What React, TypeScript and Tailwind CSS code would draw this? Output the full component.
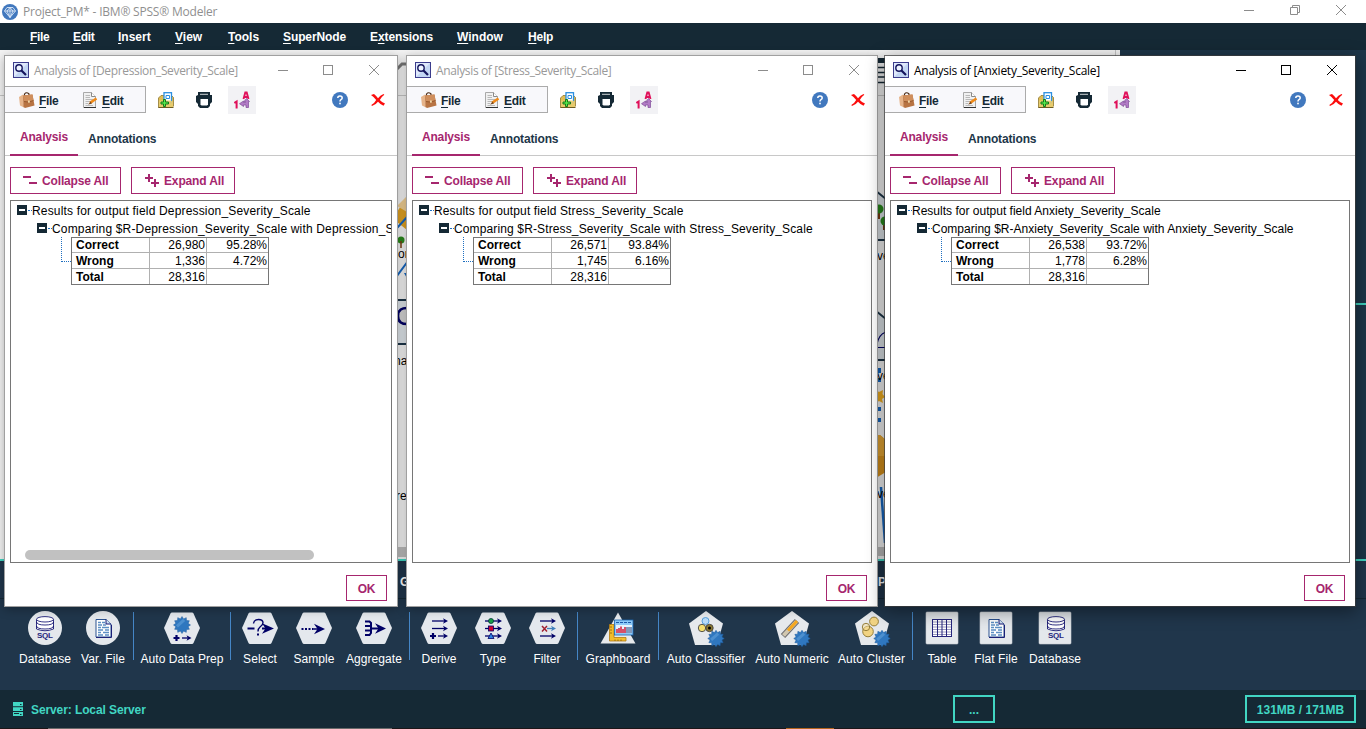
import React from "react";

const NAVY = "#000066";

function Mn({ text, k = 0 }: { text: string; k?: number }) {
  return (
    <>
      {text.slice(0, k)}
      <span className="underline underline-offset-2">{text[k]}</span>
      {text.slice(k + 1)}
    </>
  );
}

function LensIcon() {
  return (
    <svg width="16" height="16" viewBox="0 0 16 16" className="block shrink-0">
      <rect x=".5" y=".5" width="15" height="15" fill="#dfe9fb" stroke="#3c3c8c" />
      <path d="M1 15L15 15L15 1Z" fill="#c3d6f3" />
      <circle cx="6" cy="6" r="3.2" fill="#eef5ff" stroke="#15155e" strokeWidth="1.4" />
      <path d="M8.5 8.5L13 13" stroke="#15155e" strokeWidth="2.2" />
    </svg>
  );
}

function BagIcon() {
  return (
    <svg width="16" height="16" viewBox="0 0 16 16" className="block shrink-0">
      <path d="M5.500 4V2Q7.500 -.5 10 2V4" fill="none" stroke="#4b2c18" strokeWidth="1.2" />
      <path d="M0 5L4 2.500L5 15.500L1 13.500Z" fill="#e6b48a" />
      <path d="M4 3.500L13.500 2.500L15.500 13.500L6 16L4.500 15Z" fill="#b87443" />
      <path d="M4 3.500L13.500 2.500L14.500 8.500L9.500 10L5 9.500Z" fill="#cf8e5c" />
      <path d="M5 9.500L9.500 10L14.500 8.500" stroke="#8a4f25" fill="none" strokeWidth=".8" />
      <rect x="9" y="8.500" width="1.800" height="2.200" fill="#f2d9a8" />
    </svg>
  );
}

function EditIcon() {
  return (
    <svg width="16" height="16" viewBox="0 0 16 16" className="block shrink-0">
      <path d="M.5 .5H8.500L12.500 4.500V15.500H.5Z" fill="#f1f1f1" stroke="#a9a9a9" />
      <path d="M8.500 .5V4.500H12.500" fill="#fff" stroke="#8a8a8a" />
      <path d="M2.500 3.500H7M2.500 5.500H7M2.500 7.500H10M2.500 9.500H8M2.500 11.500H5M2.500 13.500H10" stroke="#b9b9b9" />
      <path d="M13.500 6.500L7 10.800" stroke="#f08a18" strokeWidth="2.600" />
      <path d="M7.800 9.500L5 12.500L8.800 11.800Z" fill="#7a4a20" />
      <path d="M1 15.500H13" stroke="#333" />
    </svg>
  );
}

function SaveIcon() {
  return (
    <svg width="16" height="16" viewBox="0 0 16 16" className="block">
      <path d="M.5 6L3 3.500H13.500L15.500 5.500V14L14 15.500H.5Z" fill="#e2bd52" stroke="#8f7a32" strokeWidth=".8" />
      <rect x="6" y=".7" width="7.500" height="10" fill="#fff" stroke="#2a8fe0" strokeWidth="1.300" />
      <path d="M8 3.500H11.500V6.500H8Z" fill="none" stroke="#2a8fe0" />
      <path d="M1 8.500H12.500L15 9.500V15H1Z" fill="#e8cc70" fillOpacity=".9" />
      <path d="M3 10H5.500V7.500H7.500V10H10.500V12H7.500V14.500H5.500V12H3Z" fill="#56e84a" stroke="#167a1a" />
      <path d="M.5 15.500H15.500" stroke="#6c5b22" />
    </svg>
  );
}

function PrintIcon() {
  return (
    <svg width="16" height="16" viewBox="0 0 16 16" className="block">
      <path d="M2 0H14V3H16V10L14 12V14L12 16H4L2 14V12L0 10V4L2 3Z" fill="#152935" />
      <path d="M4 2.300H12" stroke="#fff" strokeWidth=".8" />
      <path d="M4.500 7H12V12.500L11 13.500H5.500L4.500 12.500Z" fill="#fff" />
    </svg>
  );
}

function SortIcon() {
  return (
    <svg width="16" height="18" viewBox="0 0 16 18" className="block">
      <path d="M9.500 8L11.300 1.500H12.700L14.500 8M10 6H14" fill="none" stroke="#e0105a" strokeWidth="1.900" />
      <path d="M.3 12L2.600 10.500V17.500" fill="none" stroke="#e0105a" strokeWidth="2" />
      <path d="M12.500 7.500L15.500 10.500H14.500V16.500H12V14H9.500V15.500L5.500 12.700L9.500 10V11.500H11.500V10.500H10Z" fill="#b27bc6" stroke="#804b98" strokeWidth=".7" />
    </svg>
  );
}

function HelpIcon() {
  return (
    <svg width="16" height="16" viewBox="0 0 16 16" className="block">
      <circle cx="8" cy="8" r="8" fill="#4178be" />
      <path d="M5.800 6Q5.800 4 8 4T10.200 5.900Q10.200 7 9 7.600Q8 8.200 8 9.500" fill="none" stroke="#fff" strokeWidth="1.500" />
      <rect x="7.200" y="10.700" width="1.600" height="1.600" fill="#fff" />
    </svg>
  );
}

function RedX() {
  return (
    <svg width="14" height="12" viewBox="0 0 14 12" className="block">
      <path d="M0 1L3 0Q6 2.500 7 4.200Q9 1.500 12.500 0L13.300 .8Q9.800 3.500 8.800 6Q11 8.500 14 9.500L12.500 11.800Q9 10 7 7.700Q5 10.500 1 12L.3 11Q4 8.500 5.200 6Q3 3 0 1Z" fill="#fb0d0d" />
    </svg>
  );
}

function Caption({ stroke, kind }: { stroke: string; kind: "min" | "max" | "close" | "restore" }) {
  return (
    <svg width="12" height="12" viewBox="0 0 12 12" className="block" fill="none" stroke={stroke}>
      {kind === "min" && <path d="M1 6.500H11" />}
      {kind === "max" && <rect x="1.500" y="1.500" width="9" height="9" />}
      {kind === "close" && <path d="M1 1L11 11M11 1L1 11" />}
      {kind === "restore" && <path d="M3.500 3.500V1.500H10.500V8.500H8.500M1.500 3.500H8.500V10.500H1.500Z" />}
    </svg>
  );
}

function TreeBox() {
  return (
    <>
      <span className="flex h-[10px] w-[10px] shrink-0 items-center justify-center bg-[#152935]">
        <span className="h-[2px] w-[6px] bg-white" />
      </span>
      <span className="ml-px w-[4px] shrink-0 border-t border-dotted border-[#1f70c1]" />
    </>
  );
}

type Win = {
  name: string;
  rows: [string, string, string][];
  place: string;
  frame: string;
  title: string;
  titleColor: string;
  tree: string;
  ink: string;
  scroll?: boolean;
};

function AnalysisWindow({ w }: { w: Win }) {
  return (
    <div className={`absolute flex flex-col bg-white ${w.place} ${w.frame}`}>
      <div className="flex h-[30px] shrink-0 items-center pl-[8px]">
        <span className="-mt-[2px]"><LensIcon /></span>
        <span className={`ml-[5px] flex-1 whitespace-nowrap font-['Open_Sans',sans-serif] text-[12px] ${w.title} ${w.titleColor}`}>
          Analysis of [{w.name}]
        </span>
        <div className="flex items-center pb-[2px] pr-[17px]">
          <span className="mr-[33px]"><Caption stroke={w.ink} kind="min" /></span>
          <span className="mr-[34px]"><Caption stroke={w.ink} kind="max" /></span>
          <Caption stroke={w.ink} kind="close" />
        </div>
      </div>
      <div className="flex h-[28px] shrink-0 items-start">
        <div className="flex h-[27px] w-[141px] items-center border border-l-0 border-[#ababab] bg-[#f8f8fb] pl-[14px] font-bold tracking-[-0.3px] text-[#152935]">
          <BagIcon />
          <span className="ml-[4px] w-[44px] pt-[2px]"><Mn text="File" /></span>
          <EditIcon />
          <span className="ml-[3px] pt-[2px]"><Mn text="Edit" /></span>
        </div>
        <div className="flex h-[28px] flex-1 items-center">
          <span className="ml-[12px]"><SaveIcon /></span>
          <span className="ml-[22px]"><PrintIcon /></span>
          <span className="ml-[16px] flex h-[28px] w-[28px] items-center justify-center bg-[#f2f2f5]"><SortIcon /></span>
          <span className="ml-auto mr-[23px]"><HelpIcon /></span>
          <span className="mr-[12px]"><RedX /></span>
        </div>
      </div>
      <div className="flex h-[42px] shrink-0 border-b border-[#c8c8c8] pl-[5px] font-bold tracking-[-0.15px]">
        <div className="flex h-[42px] w-[68px] justify-center border-b-2 border-[#a6266e] pt-[16px] text-[#a6266e]">Analysis</div>
        <div className="ml-[10px] pt-[18px] text-[#1d3649]">Annotations</div>
      </div>
      <div className="flex h-[44px] shrink-0 items-start gap-[10px] pl-[5px] pt-[11px] font-bold tracking-[-0.15px] text-[#a6266e]">
        <div className="flex h-[27px] w-[111px] items-center border border-[#a6266e] pl-[12px]">
          <svg width="15" height="12" viewBox="0 0 15 12"><path d="M0 2H8M6 8H14" stroke="#a6266e" strokeWidth="2" /></svg>
          <span className="ml-[4px] whitespace-nowrap">Collapse All</span>
        </div>
        <div className="flex h-[27px] w-[104px] items-center border border-[#a6266e] pl-[13px]">
          <svg width="15" height="14" viewBox="0 0 15 14"><path d="M0 4H8M4 0V8M6 9H14M10 5V13" stroke="#a6266e" strokeWidth="2" /></svg>
          <span className="ml-[4px] whitespace-nowrap">Expand All</span>
        </div>
      </div>
      <div className="ml-[5px] mr-[5px] flex h-[363px] shrink-0 flex-col overflow-hidden border border-[#767676] text-black">
        <div className={`flex h-[18px] items-center pl-[6px] ${w.tree}`}>
          <TreeBox />
          <span className="whitespace-nowrap pt-[2px]">Results for output field {w.name}</span>
        </div>
        <div className={`flex h-[18px] items-center pl-[26px] ${w.tree}`}>
          <TreeBox />
          <span className="whitespace-nowrap pt-[2px]">Comparing $R-{w.name} with {w.name}</span>
        </div>
        <div className="flex pl-[50px]">
          <span className="h-[25px] w-[10px] border-b border-l border-dotted border-[#1f70c1]" />
          <div className="grid w-[198px] grid-cols-[78px_57px_61px] grid-rows-[15px_16px_15px] border border-[#767676] leading-[15px]">
            {w.rows.map((r, i) => (
              <React.Fragment key={r[0]}>
                <span className={`border-r border-[#b0b0b0] pl-[4px] font-bold ${i < 2 ? "border-b" : ""} ${i ? "pt-px" : ""}`}>{r[0]}</span>
                <span className={`border-r border-[#b0b0b0] pr-px text-right ${i < 2 ? "border-b" : ""} ${i ? "pt-px" : ""}`}>{r[1]}</span>
                <span className={`border-[#b0b0b0] pr-px text-right ${i < 2 ? "border-b" : ""} ${i ? "pt-px" : ""}`}>{r[2]}</span>
              </React.Fragment>
            ))}
          </div>
        </div>
        {w.scroll && <div className="mb-[2px] ml-[14px] mt-auto h-[10px] w-[289px] rounded-full bg-[#c1c1c1]" />}
      </div>
      <div className="mr-[10px] mt-[12px] flex h-[26px] w-[41px] items-center justify-center self-end border border-[#a6266e] pt-px font-bold tracking-[-0.2px] text-[#a6266e]">OK</div>
    </div>
  );
}

const windows: Win[] = [
  {
    name: "Depression_Severity_Scale",
    rows: [["Correct", "26,980", "95.28%"], ["Wrong", "1,336", "4.72%"], ["Total", "28,316", ""]],
    place: "left-[5px] top-[56px] h-[550px] w-[392px]",
    frame: "shadow-[0_0_0_1px_#a0a0a0,0_2px_10px_1px_rgba(0,0,0,0.3)]",
    title: "tracking-[-0.35px]",
    titleColor: "text-[#999999]",
    tree: "tracking-[0.17px]",
    ink: "#8c8c8c",
    scroll: true,
  },
  {
    name: "Stress_Severity_Scale",
    rows: [["Correct", "26,571", "93.84%"], ["Wrong", "1,745", "6.16%"], ["Total", "28,316", ""]],
    place: "left-[407px] top-[56px] h-[550px] w-[470px]",
    frame: "shadow-[0_0_0_1px_#a0a0a0,0_2px_10px_1px_rgba(0,0,0,0.3)]",
    title: "tracking-[-0.36px]",
    titleColor: "text-[#999999]",
    tree: "tracking-[0.13px]",
    ink: "#8c8c8c",
  },
  {
    name: "Anxiety_Severity_Scale",
    rows: [["Correct", "26,538", "93.72%"], ["Wrong", "1,778", "6.28%"], ["Total", "28,316", ""]],
    place: "left-[885px] top-[56px] h-[550px] w-[470px]",
    frame: "shadow-[0_0_0_1px_rgba(60,60,60,0.7),0_4px_16px_2px_rgba(0,0,0,0.4)]",
    title: "tracking-[-0.26px]",
    titleColor: "text-black",
    tree: "tracking-[0.01px]",
    ink: "#000000",
  },
];

const hex = <path d="M12 3.500H32Q33 3.500 33.500 4.500L40 19L33.500 34Q33 35 32 35H12Q11 35 10.500 34L4 19L10.500 4.500Q11 3.500 12 3.500Z" fill="#e4e8ed" />;
const circle = <circle cx="22" cy="19" r="17" fill="#e4e8ec" />;
const square = <rect x="6" y="3" width="32" height="32" rx="1" fill="#e4e8ec" stroke="#c9cfd5" strokeWidth=".6" />;
const penta = <path d="M22 2L39 14.500L33 36H11L5 14.500Z" fill="#e6e9ec" />;

function Arrow({ x1, x2, y, color = NAVY }: { x1: number; x2: number; y: number; color?: string }) {
  return (
    <>
      <path d={`M${x1} ${y}H${x2 - 3}`} stroke={color} strokeWidth="1.300" />
      <path d={`M${x2} ${y}l-5 -2.700l1.300 2.700l-1.300 2.700z`} fill={color} />
    </>
  );
}

function Gear({ cx, cy, r = 7 }: { cx: number; cy: number; r?: number }) {
  const pts = Array.from({ length: 24 }, (_, i) => {
    const a = (i * Math.PI) / 12;
    const q = i % 2 ? r * 0.88 : r * 1.18;
    return `${(cx + q * Math.cos(a)).toFixed(2)},${(cy + q * Math.sin(a)).toFixed(2)}`;
  }).join(" ");
  return (
    <>
      <polygon points={pts} fill="#2f77bf" stroke="#1d5a9c" strokeWidth=".5" />
      <path d={`M${cx - r * 0.7} ${cy + r * 0.2}L${cx + r * 0.3} ${cy - r * 0.7}`} stroke="#69a8df" strokeWidth="3" opacity=".5" />
    </>
  );
}

function Sql({ r = 0 }: { r?: number }) {
  return (
    <g transform={`translate(${r} 0)`}>
      <path d="M13.500 10.500V20Q22 23.500 30.500 20V10.500" fill="#fff" stroke={NAVY} strokeWidth=".8" />
      <ellipse cx="22" cy="10.300" rx="8.500" ry="2.700" fill="#fff" stroke={NAVY} strokeWidth=".8" />
      <path d="M13.500 13Q14 16 22 16T30.500 13M13.500 17Q14 20 22 20T30.500 17" fill="none" stroke={NAVY} strokeWidth=".8" />
      <text x="22" y="29" textAnchor="middle" fontSize="8" fontWeight="bold" fontFamily="Liberation Sans, sans-serif" fill="#26267c" textLength="16">SQL</text>
    </g>
  );
}

function DocGlyph() {
  return (
    <>
      <path d="M15 10.500H25L30 15V28H15Z" fill="#fff" stroke="#2a5290" />
      <path d="M25 10.500V15H30" fill="#cfe0f3" stroke={NAVY} strokeWidth=".9" />
      <path d="M17 13.500H20M21 13.500H24M17 16H21M22 16H25M17 18.500H20M21 18.500H28M17 21H22M24 21H28M17 23.500H20M22 23.500H28M17 26H22M24 26H28" stroke="#5c8fc4" strokeWidth="1.500" />
      <path d="M30.500 16V28.500H15" fill="none" stroke={NAVY} strokeWidth=".8" />
    </>
  );
}

const glyphs: Record<string, React.ReactNode> = {
  db: <>{circle}<Sql /></>,
  file: <>{circle}<DocGlyph /></>,
  prep: <>{hex}<Gear cx={22} cy={16} r={7.200} /><path d="M13.500 29H19.500M16.500 26V32" stroke={NAVY} strokeWidth="2.200" /><Arrow x1={22} x2={31.500} y={29} /></>,
  select: <>{hex}<path d="M9.500 19.500H16.500M24 19.500H28" stroke={NAVY} strokeWidth="1.800" /><path d="M15.500 14.500Q16 10.500 20.500 10.500Q25 10.500 25 13.800Q25 16 22 18Q20 19.500 20 22.500" fill="none" stroke={NAVY} strokeWidth="1.400" /><rect x="19" y="24.500" width="2" height="2" fill={NAVY} /><path d="M36 19.500l-12 -5.300l3.500 5.300l-3.500 5.300z" fill={NAVY} /></>,
  sample: <>{hex}<path d="M9.500 20H21" stroke={NAVY} strokeWidth="2" strokeDasharray="2 1.500" /><path d="M21 20H26" stroke={NAVY} strokeWidth="1.500" /><path d="M33 20l-11 -5.300l3.500 5.300l-3.500 5.300z" fill={NAVY} /></>,
  agg: <>{hex}<path d="M13 12.500H17.500L19 14V24L17.500 26H13M13 17H19M13 21.500H19M19 19.500H27" fill="none" stroke={NAVY} strokeWidth="2" /><path d="M34 19.500l-11 -5.300l3.500 5.300l-3.500 5.300z" fill={NAVY} /></>,
  derive: <>{hex}<Arrow x1={15} x2={31} y={12} /><Arrow x1={15} x2={31} y={19.500} /><path d="M13 27H19M16 24V30" stroke={NAVY} strokeWidth="2.200" /><Arrow x1={21} x2={31} y={27} /></>,
  type: <>{hex}<Arrow x1={14} x2={31} y={12} /><circle cx="20" cy="12" r="2.500" fill="#16a04a" stroke="#033" strokeWidth=".8" /><Arrow x1={14} x2={31} y={19.500} /><rect x="17.500" y="17" width="5" height="5" fill="#d00032" stroke={NAVY} strokeWidth=".8" /><Arrow x1={14} x2={31} y={27} /><path d="M20 24L23 29.500H17Z" fill="#2c7fe0" stroke={NAVY} strokeWidth=".8" /></>,
  filter: <>{hex}<Arrow x1={15} x2={31} y={12} /><path d="M17 17L22 22.500M22 17L17 22.500" stroke="#a02030" strokeWidth="1.500" /><Arrow x1={22} x2={31} y={19.500} color="#4280bc" /><Arrow x1={15} x2={31} y={27} /></>,
  graph: (
    <>
      <path d="M22 3.500L39.500 34.500H4.500Z" fill="#e6e9ec" />
      <path d="M13.500 15.500H18V28.500H30V32H13.500Z" fill="#f1bd2c" stroke="#b37a10" strokeWidth=".8" />
      <path d="M14 18H16M14 21H16M14 24H16M19 30.500V32M22 30.500V32M25 30.500V32" stroke="#7d5306" strokeWidth=".7" />
      <rect x="18.500" y="11" width="18.500" height="15" fill="#8ccaf8" stroke="#1d65b0" strokeWidth=".8" />
      <path d="M20 13.500H35" stroke="#1c58a8" strokeWidth="1.200" strokeDasharray="3 1" />
      <rect x="20" y="16" width="16" height="8" fill="#e6f3fd" />
      <path d="M21 24V20M23 24V19M25 24V17.500M27 24V20M29 24V18" stroke="#d01a3a" strokeWidth="1.500" />
      <path d="M31 24V18M33 24V18M35 24V18" stroke="#1d3f78" strokeWidth="1" />
    </>
  ),
  classifier: <>{penta}<circle cx="21.500" cy="12" r="3.500" fill="#b8dbf8" stroke="#559edb" /><circle cx="18" cy="19" r="3.700" fill="#f5df6e" stroke="#444" strokeWidth=".9" /><circle cx="25.500" cy="19" r="3.700" fill="#8c792f" stroke="#444" strokeWidth=".9" /><circle cx="25.500" cy="19" r="1.500" /><Gear cx={32} cy={29.500} /></>,
  numeric: <>{penta}<path d="M13 27L27 12" stroke="#6d6d70" strokeWidth="6" /><path d="M13.500 26.500L26.500 12.500" stroke="#d1c7b0" strokeWidth="4" /><path d="M18 21.500L27 12" stroke="#f5a71d" strokeWidth="3" /><Gear cx={32} cy={29.500} /></>,
  cluster: <>{penta}<circle cx="24" cy="12.500" r="4.400" fill="#f1d382" stroke="#8b742e" strokeWidth=".9" /><circle cx="18" cy="22.500" r="5.300" fill="#f1d382" stroke="#8b742e" strokeWidth=".9" /><circle cx="16" cy="18" r="3.700" fill="#f6dfa0" fillOpacity=".5" stroke="#8b742e" strokeWidth=".9" /><Gear cx={32} cy={29.500} /></>,
  table: <>{square}<rect x="12.500" y="10.500" width="19" height="17" fill="#fff" stroke="#26267c" /><path d="M13 13H31M13 15.500H31M13 18H31M13 20.500H31M13 23H31M13 25.500H31" stroke="#8080b0" strokeWidth=".8" /><path d="M17.500 11V27M22 11V27M26.500 11V27" stroke="#26267c" strokeWidth="1" /></>,
  flat: <>{square}<DocGlyph /></>,
  db2: <>{square}<Sql r={1} /></>,
};

const palette: { g?: string; label?: string; w: string }[] = [
  { g: "db", label: "Database", w: "w-[58px]" },
  { g: "file", label: "Var. File", w: "w-[58px]" },
  { w: "ml-px" },
  { g: "prep", label: "Auto Data Prep", w: "w-[96px]" },
  { w: "ml-0" },
  { g: "select", label: "Select", w: "w-[58px]" },
  { g: "sample", label: "Sample", w: "w-[50px]" },
  { g: "agg", label: "Aggregate", w: "w-[70px]" },
  { w: "ml-0" },
  { g: "derive", label: "Derive", w: "w-[58px]" },
  { g: "type", label: "Type", w: "w-[50px]" },
  { g: "filter", label: "Filter", w: "w-[58px]" },
  { w: "ml-px" },
  { g: "graph", label: "Graphboard", w: "w-[80px]" },
  { w: "ml-0" },
  { g: "classifier", label: "Auto Classifier", w: "w-[94px]" },
  { g: "numeric", label: "Auto Numeric", w: "w-[78px]" },
  { g: "cluster", label: "Auto Cluster", w: "w-[81px]" },
  { w: "ml-0" },
  { g: "table", label: "Table", w: "w-[58px]" },
  { g: "flat", label: "Flat File", w: "w-[50px]" },
  { g: "db2", label: "Database", w: "w-[68px]" },
];

const menus: [string, number, string][] = [
  ["File", 0, "w-[43px] tracking-[-0.3px]"],
  ["Edit", 0, "w-[45px] tracking-[-0.3px]"],
  ["Insert", 0, "w-[57px]"],
  ["View", 0, "w-[53px]"],
  ["Tools", 0, "w-[55px]"],
  ["SuperNode", 0, "w-[87px] tracking-[-0.1px]"],
  ["Extensions", 1, "w-[87px] tracking-[-0.1px]"],
  ["Window", 0, "w-[71px]"],
  ["Help", 0, "w-[40px] tracking-[-0.2px]"],
];

function StreamCanvas() {
  return (
    <div className="relative h-full w-[1115px] overflow-hidden bg-[#f4f4f4] text-black">
      <div className="h-[46px] border-b border-[#c6c6c6] bg-[#f4f4f4]" />
      <svg width="12" height="510" viewBox="397 50 12 510" className="absolute left-[397px] top-0">
        <path d="M397 69L402 64H409" fill="none" stroke="#777" strokeWidth="3" />
        <path d="M397 212L407 196V230L397 222Z" fill="#e2a322" />
        <path d="M397 206L407 196V212Z" fill="#f0cf94" />
        <path d="M397 228L408 216M397 276L408 261" stroke="#1566c0" strokeWidth="2" />
        <circle cx="401" cy="240" r="3.500" fill="#2a8a1c" />
        <path d="M401 241V248" stroke="#7a3b12" strokeWidth="1.500" />
        <path d="M404 273H409V282Z" fill="#1566c0" />
        <path d="M396 300H410V344H396Z" fill="#dfe5ea" stroke="#1d3649" strokeWidth="2" />
        <path d="M409 308Q398 307 398 316T409 324" fill="#d5d5d5" stroke={NAVY} strokeWidth="2.500" />
        <rect x="397" y="547" width="12" height="10" fill="#bcbcbc" />
      </svg>
      <span className="absolute left-[398px] top-[197px]">or</span>
      <span className="absolute left-[394px] top-[304px]">na</span>
      <span className="absolute left-[396px] top-[439px]">re</span>
      <svg width="9" height="510" viewBox="876 50 9 510" className="absolute left-[876px] top-0">
        <path d="M876 60.500H885" stroke="#152935" strokeWidth="5" />
        <path d="M876 67.500H885M876 72.500H885M876 77H885M876 82.500H885" stroke="#152935" strokeWidth="1.300" />
        <path d="M876 191L886 199V240H876ZM876 311L886 319V360H876Z" fill="#dfe5ea" />
        <path d="M876 191L886 199M876 240H886M876 311L886 319M876 360H886" stroke="#1d3649" strokeWidth="2" />
        <path d="M879 211V219M884 224V230" stroke="#7a3b12" strokeWidth="2" />
        <circle cx="879" cy="209" r="4.500" fill="#2a8a1c" />
        <circle cx="885" cy="221" r="4.500" fill="#2a8a1c" />
        <path d="M877 344Q879 334 886 332M877 347.500H886" fill="none" stroke={NAVY} strokeWidth="1.200" />
        <path d="M879.500 368V373M879.500 378V382M879.500 407V411M879.500 418V422" stroke="#1566c0" strokeWidth="3" />
        <path d="M876 390L879 392L883 390L882.500 394L885 397L882 399L883 403L879 401L876 403Z" fill="#f3b020" />
        <path d="M876 435H880L886 440V472L876 478Z" fill="#d8921c" />
        <path d="M876 435H880L886 440V456H876Z" fill="#e6a735" />
        <path d="M881 487L885 543" stroke="#1566c0" strokeWidth="2.500" />
        <rect x="876" y="547" width="9" height="9" fill="#bcbcbc" />
      </svg>
      <span className="absolute left-[877px] top-[199px]">ve</span>
      <span className="absolute left-[877px] top-[319px]">ve</span>
      <span className="absolute left-[877px] top-[437px]">ve</span>
    </div>
  );
}

export default function App() {
  return (
    <div className="relative flex h-[729px] w-[1366px] flex-col overflow-hidden bg-[#20364b] font-['Liberation_Sans',Arial,sans-serif] text-[12px] leading-[14px]">
      <header className="flex h-[23px] shrink-0 items-center bg-white pl-[2px]">
        <svg width="16" height="16" viewBox="0 0 16 16">
          <circle cx="8" cy="8" r="8" fill="#4178be" />
          <path d="M5 3.500H11L13.500 7L8 13.500L2.500 7ZM2.500 7H13.500M8 3.500V13.500M8 3.500L5 7L8 13.500L11 7Z" fill="none" stroke="#dbe8f7" strokeWidth=".9" />
        </svg>
        <span className="ml-[5px] flex-1 font-['Open_Sans',sans-serif] text-[12px] tracking-[-0.21px] text-[#8f8f8f]">Project_PM* - IBM® SPSS® Modeler</span>
        <div className="flex items-center gap-[34px] pb-[3px] pr-[19px]">
          <Caption stroke="#8c8c8c" kind="min" />
          <Caption stroke="#8c8c8c" kind="restore" />
          <Caption stroke="#8c8c8c" kind="close" />
        </div>
      </header>
      <nav className="flex h-[27px] shrink-0 items-center bg-[#152935] pl-[30px] font-bold text-white">
        {menus.map(([t, k, w]) => (
          <span key={t} className={w}><Mn text={t} k={k} /></span>
        ))}
      </nav>
      <main className="flex h-[509px] shrink-0">
        <StreamCanvas />
        <div className="w-[5px] border-l border-[#c6c6c6] bg-[#f4f4f4]" />
        <div className="flex flex-1 flex-col bg-[#1d3649]">
          <div className="h-[255px] border-b-2 border-[#3fd0bd]" />
        </div>
      </main>
      <section className="flex h-[131px] shrink-0 flex-col border-t-2 border-[#41d6c3] bg-[#20364b] text-white">
        <div className="flex h-[38px] shrink-0 items-center border-b border-[#152935] pl-[400px] pt-[4px] font-bold">
          <span className="w-[478px]">G</span>
          <span>P</span>
        </div>
        <div className="flex pl-[16px] pt-[10px]">
          {palette.map((p, i) =>
            p.g ? (
              <div key={i} className={`flex shrink-0 flex-col items-center ${p.w}`}>
                <svg width="44" height="40" viewBox="0 0 44 40" className="block shrink-0">{glyphs[p.g]}</svg>
                <span className="mt-[3px] whitespace-nowrap tracking-[0.08px]">{p.label}</span>
              </div>
            ) : (
              <div key={i} className={`mt-[3px] h-[48px] w-px shrink-0 bg-[#4586c6] ${p.w}`} />
            ),
          )}
        </div>
      </section>
      <footer className="flex h-[38px] shrink-0 items-center bg-[#152935] pl-[13px] pr-[10px] font-bold text-[#41d6c3]">
        <svg width="10" height="14" viewBox="0 0 10 14">
          <path d="M0 0H10V4.300H0ZM0 5.300H10V9H0ZM0 10H10V14H0Z" fill="#41d6c3" />
          <path d="M7 2.500H8.500M7 7.500H8.500M1 11.500H6M7 12.500H8.500" stroke="#152935" />
        </svg>
        <span className="ml-[8px] w-[922px] pt-px tracking-[-0.1px]">Server: Local Server</span>
        <span className="flex h-[28px] w-[42px] items-center justify-center border-2 border-[#41d6c3] pt-px">...</span>
        <span className="ml-auto flex h-[28px] w-[111px] items-center justify-center whitespace-nowrap border-2 border-[#41d6c3] pt-px">131MB / 171MB</span>
      </footer>
      <div className="flex h-px shrink-0 bg-[#1c1618]">
        <span className="ml-[48px] w-[344px] bg-[#6a6a6a]" />
        <span className="ml-[394px] w-[48px] bg-[#b5651d]" />
      </div>
      {windows.map((w) => (
        <AnalysisWindow key={w.name} w={w} />
      ))}
    </div>
  );
}
